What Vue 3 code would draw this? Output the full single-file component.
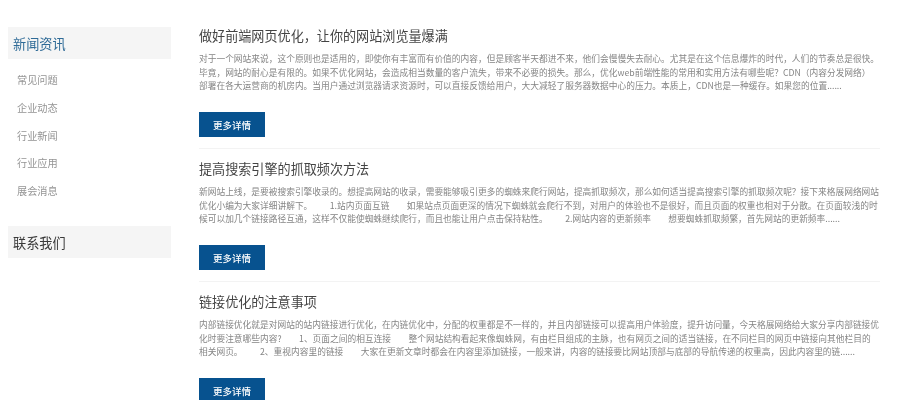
<script setup>
const nav = ['常见问题', '企业动态', '行业新闻', '行业应用', '展会消息']
const articles = [
  {
    title: '做好前端网页优化，让你的网站浏览量爆满',
    lines: [
      '对于一个网站来说，这个原则也是适用的，即使你有丰富而有价值的内容，但是顾客半天都进不来，他们会慢慢失去耐心。尤其是在这个信息爆炸的时代，人们的节奏总是很快。',
      '毕竟，网站的耐心是有限的。如果不优化网站，会造成相当数量的客户流失，带来不必要的损失。那么，优化web前端性能的常用和实用方法有哪些呢？CDN（内容分发网络）',
      '部署在各大运营商的机房内。当用户通过浏览器请求资源时，可以直接反馈给用户，大大减轻了服务器数据中心的压力。本质上，CDN也是一种缓存。如果您的位置......'
    ]
  },
  {
    title: '提高搜索引擎的抓取频次方法',
    lines: [
      '新网站上线，是要被搜索引擎收录的。想提高网站的收录，需要能够吸引更多的蜘蛛来爬行网站，提高抓取频次，那么如何适当提高搜索引擎的抓取频次呢？接下来格展网络网站',
      '优化小编为大家详细讲解下。　　1.站内页面互链　　如果站点页面更深的情况下蜘蛛就会爬行不到，对用户的体验也不是很好，而且页面的权重也相对于分散。在页面较浅的时',
      '候可以加几个链接路径互通，这样不仅能使蜘蛛继续爬行，而且也能让用户点击保持粘性。　　2.网站内容的更新频率　　想要蜘蛛抓取频繁，首先网站的更新频率......'
    ]
  },
  {
    title: '链接优化的注意事项',
    lines: [
      '内部链接优化就是对网站的站内链接进行优化，在内链优化中，分配的权重都是不一样的，并且内部链接可以提高用户体验度，提升访问量，今天格展网络给大家分享内部链接优',
      '化时要注意哪些内容?　　1、页面之间的相互连接　　整个网站结构看起来像蜘蛛网，有由栏目组成的主脉，也有网页之间的适当链接，在不同栏目的网页中链接向其他栏目的',
      '相关网页。　　2、重视内容里的链接　　大家在更新文章时都会在内容里添加链接，一般来讲，内容的链接要比网站顶部与底部的导航传递的权重高，因此内容里的链......'
    ]
  }
]
</script>

<template>
  <div class="page">
    <aside class="side">
      <h2 class="side-head active">新闻资讯</h2>
      <ul class="nav">
        <li v-for="n in nav" :key="n">{{ n }}</li>
      </ul>
      <h2 class="side-head">联系我们</h2>
    </aside>
    <main class="main">
      <article v-for="a in articles" :key="a.title" class="article">
        <h3 class="title">{{ a.title }}</h3>
        <div class="body">
          <p v-for="l in a.lines" :key="l">{{ l }}</p>
        </div>
        <a class="btn">更多详情</a>
      </article>
    </main>
  </div>
</template>

<style>
html, body { margin: 0; background: #fff; overflow: hidden; }
</style>

<style scoped>
.page {
  display: flex;
  height: 400px;
  overflow: hidden;
  box-sizing: border-box;
  padding: 27px 0 0 8px;
  gap: 28px;
  font-family: "Noto Sans CJK SC", "Liberation Sans", sans-serif;
  text-spacing-trim: space-all;
  filter: blur(0.3px);
}
.side { width: 163px; flex: none; }
.side-head {
  margin: 0;
  height: 32px;
  line-height: 34px;
  padding-left: 5px;
  background: #f5f5f5;
  font-size: 13.2px;
  font-weight: 400;
  color: #3a3a3a;
}
.side-head.active { color: #2f6b97; }
.nav { list-style: none; margin: 0; padding: 7.4px 0 21.6px 9px; }
.nav li {
  height: 27.6px;
  line-height: 27.6px;
  font-size: 10.2px;
  color: #949494;
}
.main { width: 681px; flex: none; }
.article {
  height: 122px;
  margin-bottom: 11px;
  border-bottom: 1px solid #f3f3f3;
  box-sizing: border-box;
}
.article:last-child { border-bottom: 0; }
.title {
  margin: 0;
  height: 20px;
  line-height: 18px;
  font-size: 13.1px;
  font-weight: 400;
  color: #444;
}
.body { margin-top: 5px; }
.body p {
  margin: 0;
  height: 13.5px;
  line-height: 13.5px;
  font-size: 8.72px;
  color: #858585;
  white-space: nowrap;
}
.btn {
  display: block;
  width: 66px;
  height: 25px;
  margin-top: 19px;
  background: #07528f;
  color: #fff;
  text-align: center;
  line-height: 26px;
  font-size: 9.5px;
  font-weight: 500;
}
</style>
